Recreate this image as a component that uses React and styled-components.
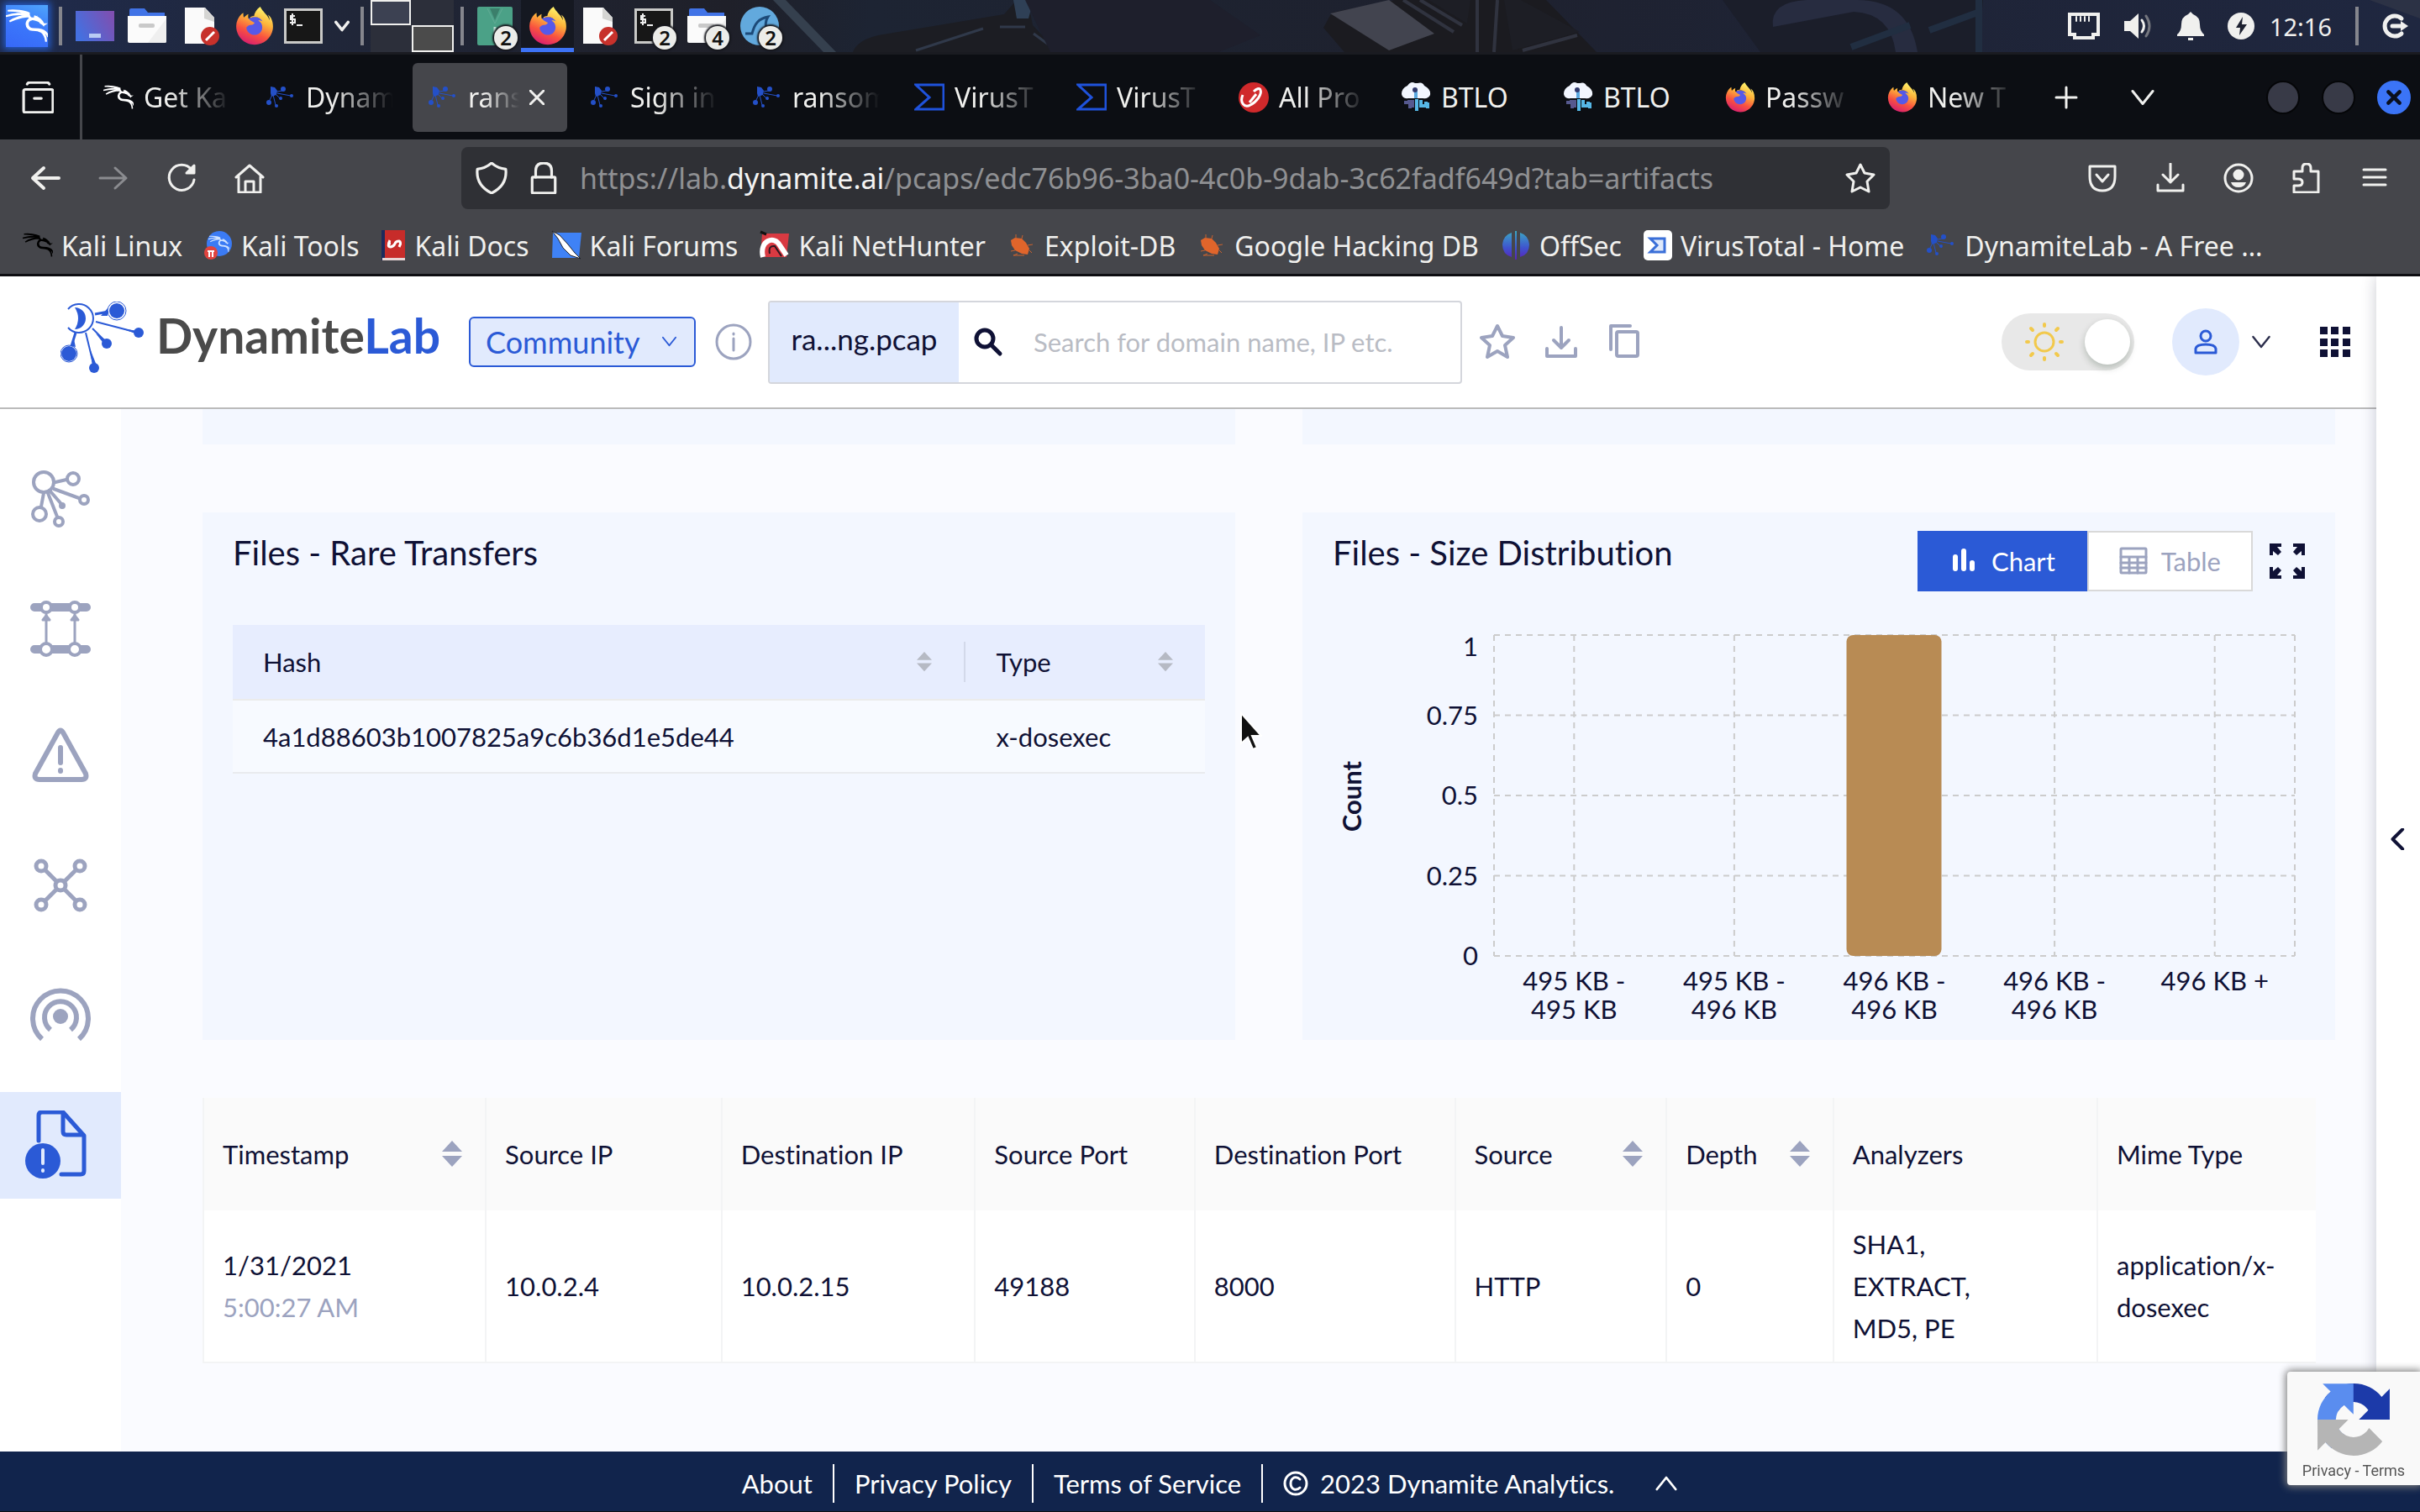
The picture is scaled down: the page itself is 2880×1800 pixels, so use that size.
import React from "react";
import styled, { createGlobalStyle, css } from "styled-components";
import { SiKalilinux } from "react-icons/si";
import { FaFirefoxBrowser } from "react-icons/fa";

const INK = "#0f1135";
const BLUE = "#2b5ad6";
const MUTED = "#9ca3bf";
const PALE = "#e1eafd";
const CHROME_TEXT = "#f0f0ee";

const GlobalStyle = createGlobalStyle`
  * { box-sizing: border-box; }
  html, body { margin: 0; padding: 0; }
  body {
    font-family: Lato, "Liberation Sans", sans-serif;
    font-size: 31px;
    font-variant-ligatures: none;
    color: ${INK};
    background: #fff;
  }
  button, input, select { font: inherit; color: inherit; }
  button { border: 0; padding: 0; background: none; cursor: pointer; }
  a { color: inherit; text-decoration: none; }
  svg { display: block; flex: none; }
`;

const Desktop = styled.div`
  min-height: 100vh;
  display: flex;
  flex-direction: column;
`;

/* ---------- desktop panel ---------- */

const Panel = styled.header`
  position: relative;
  height: 65px;
  display: flex;
  align-items: center;
  background: #1d2130;
  border-bottom: 3px solid #1a1b21;
  overflow: hidden;
  font-family: "Noto Sans", sans-serif;
  color: ${CHROME_TEXT};
`;
const Wallpaper = styled.svg`
  position: absolute;
  inset: 0;
  width: 100%;
  height: 100%;
`;
const PanelGroup = styled.div`
  position: relative;
  display: flex;
  align-items: center;
  height: 100%;
  gap: ${(p) => p.$gap || 0}px;
  padding: 0 ${(p) => p.$pad || 0}px;
  margin-left: ${(p) => (p.$end ? "auto" : 0)};
`;
const PanelRule = styled.span`
  position: relative;
  width: 4px;
  height: 46px;
  background: #85868d;
`;
const PanelButton = styled.button`
  position: relative;
  height: 100%;
  width: ${(p) => p.$w || 63}px;
  display: grid;
  place-items: center;
  ${(p) => p.$active && css`
    background: #151821;
    box-shadow: inset 0 -5px #3d73f6;
  `}
`;
const KaliButton = styled.button`
  width: 50px;
  height: 50px;
  display: grid;
  place-items: center;
  color: #fff;
  background: linear-gradient(20deg, #3768f7, #3b77fb 50%, #4fa5fb);
  box-shadow: 0 0 8px 3px #245bc9;
`;
const Badge = styled.span`
  position: absolute;
  right: 4px;
  bottom: 3px;
  width: 28px;
  height: 28px;
  border-radius: 50%;
  background: #ecece9;
  box-shadow: 0 0 2px 2px #15161c;
  color: #111;
  font-size: 24px;
  font-weight: 600;
  line-height: 28px;
  text-align: center;
`;
const Workspaces = styled.div`
  display: grid;
  grid-template-columns: 48px 50px;
  grid-template-rows: 30px 32px;
  column-gap: 1px;
  height: 62px;
  background: #2c2f3b;
`;
const Space = styled.button`
  background: ${(p) => p.$fill || "#2c2f3a"};
  border: ${(p) => (p.$on ? "2px solid #f0f0ee" : 0)};
`;
const ClockGroup = styled.div`
  display: flex;
  align-items: center;
  gap: 18px;
  font-size: 29px;
`;

/* ---------- browser ---------- */

const Browser = styled.section`
  position: relative;
  z-index: 2;
  font-family: "Noto Sans", sans-serif;
  font-size: 32px;
  color: ${CHROME_TEXT};
  background: #45464b;
  border-bottom: 3px solid #0e0e12;
`;
const TabStrip = styled.div`
  height: 101px;
  display: flex;
  align-items: center;
  background: #0c0e13;
`;
const TabHistory = styled.button`
  width: 98px;
  height: 100%;
  padding-left: 26px;
  display: flex;
  align-items: center;
  border-right: 3px solid #45464b;
`;
const Tabs = styled.div`
  display: flex;
  gap: 9px;
  padding-left: 7px;
`;
const Tab = styled.button`
  width: 184px;
  height: 82px;
  padding: 0 ${(p) => (p.$active ? 27 : 14)}px 0 18px;
  display: flex;
  align-items: center;
  gap: 12px;
  border-radius: 6px;
  background: ${(p) => (p.$active ? "#45464b" : "transparent")};
`;
const TabLabel = styled.span`
  flex: 1;
  min-width: 0;
  white-space: nowrap;
  text-align: left;
  ${(p) => p.$fade && css`
    mask-image: linear-gradient(90deg, #000 30%, transparent);
  `}
`;
const TabTools = styled.div`
  display: flex;
  align-items: center;
  gap: 60px;
  padding-left: 31px;
`;
const WindowButtons = styled.div`
  display: flex;
  align-items: center;
  gap: 26px;
  margin-left: auto;
  padding-right: 11px;
`;
const WindowButton = styled.button`
  width: 40px;
  height: 40px;
  border-radius: 50%;
  display: grid;
  place-items: center;
  border: 2px solid ${(p) => (p.$close ? "#3b74f6" : "#050608")};
  background: ${(p) => (p.$close ? "#3b74f6" : "#383a47")};
`;
const NavBar = styled.nav`
  height: 92px;
  display: flex;
  align-items: center;
`;
const NavGroup = styled.div`
  display: flex;
  align-items: center;
  gap: 45px;
  width: ${(p) => (p.$wide ? "549px" : "auto")};
  padding: 0 ${(p) => p.$right || 0}px 0 ${(p) => p.$left || 0}px;
`;
const UrlBar = styled.div`
  flex: 0 1 1700px;
  height: 74px;
  display: flex;
  align-items: center;
  gap: 24px;
  padding: 0 17px;
  margin-right: auto;
  border-radius: 8px;
  background: #2f3035;
`;
const Url = styled.div`
  flex: 1;
  overflow: hidden;
  white-space: nowrap;
  font-size: 34px;
  color: #8f9093;
  outline: none;
`;
const Host = styled.span`
  color: #f4f4f3;
`;
const Bookmarks = styled.nav`
  height: 68px;
  display: flex;
  align-items: center;
  gap: 26px;
  padding: 0 27px;
`;
const Bookmark = styled.a`
  display: flex;
  align-items: center;
  gap: 10px;
  white-space: nowrap;
`;

/* ---------- web page ---------- */

const Page = styled.div`
  flex: 1;
  display: flex;
`;
const Site = styled.div`
  flex: 1;
  min-width: 0;
  display: flex;
  flex-direction: column;
`;
const SideDrawer = styled.aside`
  width: 52px;
  display: grid;
  place-items: center;
  padding-bottom: 60px;
  background: #fff;
  box-shadow: 0 0 18px rgba(20, 24, 50, 0.22);
`;
const TopBar = styled.header`
  height: 158px;
  display: flex;
  align-items: center;
  padding: 0 31px 0 72px;
  background: #fff;
  border-bottom: 2px solid #bbb;
`;
const Brand = styled.a`
  display: flex;
  align-items: center;
  gap: 14px;
  width: 486px;
  padding-bottom: 8px;
`;
const BrandName = styled.span`
  padding-bottom: 8px;
  font-size: 57px;
  font-weight: 700;
  line-height: 80px;
  color: #4a4a4a;
`;
const BrandTail = styled.span`
  color: ${BLUE};
`;
const PlanBox = styled.div`
  position: relative;
  width: 270px;
`;
const PlanSelect = styled.select`
  appearance: none;
  width: 100%;
  height: 60px;
  padding: 0 18px;
  border: 2px solid ${BLUE};
  border-radius: 6px;
  background: ${PALE};
  color: ${BLUE};
  font-size: 36px;
`;
const PlanArrow = styled.span`
  position: absolute;
  right: 22px;
  top: 20px;
  color: ${BLUE};
  pointer-events: none;
`;
const IconButton = styled.button`
  display: grid;
  place-items: center;
  color: ${(p) => p.$color || MUTED};
`;
const SearchGroup = styled.form`
  display: flex;
  width: 826px;
  height: 99px;
  border: 2px solid #d4d6dc;
  border-radius: 4px;
  overflow: hidden;
`;
const FileTag = styled.span`
  width: 225px;
  display: grid;
  place-items: center;
  padding-bottom: 8px;
  background: ${PALE};
  font-size: 35px;
`;
const SearchLabel = styled.label`
  flex: 1;
  display: flex;
  align-items: center;
  gap: 34px;
  padding-left: 17px;
`;
const SearchInput = styled.input`
  flex: 1;
  min-width: 0;
  border: 0;
  outline: none;
  background: none;
  &::placeholder { color: #b9bcc4; opacity: 1; }
`;
const Actions = styled.div`
  display: flex;
  align-items: center;
  gap: ${(p) => p.$gap}px;
  padding-left: ${(p) => p.$left || 0}px;
  margin-left: ${(p) => (p.$end ? "auto" : 0)};
`;
const Toggle = styled.label`
  display: flex;
  align-items: center;
  justify-content: space-between;
  width: 158px;
  height: 68px;
  padding: 0 5px 0 28px;
  margin-right: 45px;
  border-radius: 34px;
  background: #e8e8e8;
`;
const ToggleInput = styled.input`
  appearance: none;
  margin: 0;
  width: 54px;
  height: 54px;
  border-radius: 50%;
  background: #fff;
  box-shadow: 0 4px 8px rgba(0, 35, 11, 0.22);
`;
const Avatar = styled.button`
  width: 80px;
  height: 80px;
  border-radius: 50%;
  display: grid;
  place-items: center;
  background: ${PALE};
  color: ${BLUE};
`;
const Body = styled.div`
  flex: 1;
  display: flex;
`;
const Sidebar = styled.nav`
  width: 144px;
  padding-top: 43px;
  display: flex;
  flex-direction: column;
  gap: 27px;
  background: #fff;
`;
const SideItem = styled.button`
  height: 127px;
  display: grid;
  place-items: center;
  color: ${(p) => (p.$active ? BLUE : MUTED)};
  background: ${(p) => (p.$active ? PALE : "transparent")};
`;
const Content = styled.main`
  flex: 1;
  min-width: 0;
  padding: 0 49px 80px 97px;
  background: #fafbff;
`;
const CardRow = styled.div`
  display: grid;
  grid-template-columns: 1fr 1fr;
  gap: 80px;
  margin-bottom: ${(p) => p.$below}px;
`;
const CardTail = styled.div`
  height: 42px;
  background: #f3f7ff;
`;
const Card = styled.section`
  min-height: 628px;
  min-width: 0;
  padding: 22px 36px 0;
  background: #f3f7ff;
`;
const CardHead = styled.div`
  display: flex;
  align-items: center;
  height: 72px;
  margin-bottom: 40px;
`;
const CardTitle = styled.h2`
  margin: 0 auto 0 0;
  padding-bottom: 20px;
  font-size: 40px;
  font-weight: 400;
`;
const Switcher = styled.div`
  display: flex;
  margin-right: 20px;
`;
const SwitchButton = styled.button`
  height: 72px;
  display: flex;
  align-items: center;
  gap: 16px;
  padding: 0 36px;
  background: ${(p) => (p.$active ? BLUE : "#fff")};
  color: ${(p) => (p.$active ? "#fff" : MUTED)};
  border: 2px solid ${(p) => (p.$active ? BLUE : "#d9d9d9")};
`;
const HashTable = styled.table`
  width: 100%;
  border-collapse: collapse;
  table-layout: fixed;
`;
const HashHead = styled.th`
  width: ${(p) => p.$w || "auto"};
  height: 89px;
  padding: 0;
  font-weight: 400;
  text-align: left;
  background: #e7edfe;
  border-bottom: 2px solid #ebebeb;
`;
const HashHeadInner = styled.div`
  height: 48px;
  display: flex;
  align-items: center;
  justify-content: space-between;
  padding: 0 38px 0 36px;
  color: #b6bac4;
  border-right: ${(p) => (p.$rule ? "2px solid #d3d9ea" : 0)};
`;
const HeadText = styled.span`
  color: ${INK};
`;
const HashCell = styled.td`
  height: 87px;
  padding: 0 36px;
  background: #f7faff;
  border-bottom: 2px solid #e9ebee;
`;
const LogScroller = styled.div`
  margin-right: 23px;
  overflow: hidden;
`;
const LogTable = styled.table`
  width: 100%;
  border-collapse: collapse;
  table-layout: fixed;
`;
const LogHead = styled.th`
  width: ${(p) => p.$w};
  height: 134px;
  padding: 0 27px 0 22px;
  font-weight: 400;
  text-align: left;
  white-space: nowrap;
  background: #fafafa;
  border-left: 2px solid #f3f4f5;
`;
const LogHeadInner = styled.div`
  display: flex;
  align-items: center;
  justify-content: space-between;
  color: ${MUTED};
`;
const LogCell = styled.td`
  padding: 15px 22px;
  line-height: 50px;
  background: #fff;
  border-left: 2px solid #f3f4f5;
  border-bottom: 2px solid #f3f4f5;
`;
const Faint = styled.div`
  color: ${MUTED};
`;
const Footer = styled.footer`
  position: relative;
  z-index: 1;
  height: 72px;
  padding-top: 4px;
  display: flex;
  align-items: center;
  justify-content: center;
  background: #11244c;
  border-bottom: 1px solid #0c0d12;
  color: #fff;
`;
const FooterItem = styled.span`
  height: 46px;
  display: flex;
  align-items: center;
  gap: 14px;
  padding: 0 24px;
  border-right: ${(p) => (p.$rule ? "2px solid #fff" : 0)};
`;
const Captcha = styled.aside`
  position: fixed;
  right: 0;
  bottom: 32px;
  z-index: 3;
  width: 158px;
  height: 135px;
  padding-top: 14px;
  display: flex;
  flex-direction: column;
  align-items: center;
  gap: 6px;
  border-radius: 4px 0 0 4px;
  background: #f9f9f9;
  box-shadow: 0 0 10px 2px #808080;
`;
const CaptchaLinks = styled.span`
  font-family: Roboto, sans-serif;
  font-size: 18px;
  line-height: 24px;
  color: #555;
`;
const Pointer = styled.svg`
  position: absolute;
  left: 1474px;
  top: 846px;
  z-index: 4;
`;

/* ---------- icons ---------- */

const Stroke = ({ w = 36, h, vb = "0 0 36 36", sw = 3, children, ...rest }) => (
  <svg width={w} height={h || w} viewBox={vb} fill="none" stroke="currentColor" strokeWidth={sw} strokeLinecap="round" strokeLinejoin="round" {...rest}>
    {children}
  </svg>
);
const Chevron = ({ dir = "down", w = 20, sw = 3 }) => (
  <Stroke w={w} vb="0 0 20 20" sw={sw}>
    <path d={{ down: "M2 5l8 10 8-10", up: "M2 15l8-10 8 10", left: "M14 1L5 10l9 9" }[dir]} />
  </Stroke>
);
const FirefoxIcon = ({ size = 46 }) => (
  <svg width={size} height={size} viewBox="0 0 46 46">
    <defs>
      <linearGradient id="fx" x1="0.75" y1="0.05" x2="0.35" y2="1">
        <stop offset="0" stopColor="#fff36b" />
        <stop offset="0.35" stopColor="#fdb43a" />
        <stop offset="0.68" stopColor="#f9523f" />
        <stop offset="1" stopColor="#d91f6f" />
      </linearGradient>
    </defs>
    <circle cx="23" cy="25" r="13" fill="#5659e8" />
    <FaFirefoxBrowser size={46} fill="url(#fx)" />
  </svg>
);
const FolderIcon = () => (
  <svg width="46" height="42" viewBox="0 0 46 42">
    <path d="M2 2q0-2 2-2h16l4 5h20v8H2z" fill="#4173e6" />
    <path d="M0 9h46v30q0 2-2 2H2q-2 0-2-2z" fill="#fbfbfb" />
    <path d="M46 12v27q0 2-2 2H24z" fill="#efefef" />
    <rect x="13" y="18" width="19" height="5" rx="2" fill="#c9c9c9" />
  </svg>
);
const FileIcon = () => (
  <svg width="44" height="48" viewBox="0 0 44 48">
    <path d="M1 2h24l11 12v31H1z" fill="#fafafa" />
    <path d="M24 2l12 12v5l-12-4z" fill="#d5d5d3" />
    <circle cx="31" cy="36" r="11" fill="#c7312b" />
    <path d="M26 41l10-10" stroke="#fff" strokeWidth="3" />
  </svg>
);
const TerminalIcon = () => (
  <svg width="46" height="42" viewBox="0 0 46 42">
    <rect x="1.500" y="1.500" width="43" height="39" fill="#171717" stroke="#c9c9c7" strokeWidth="3" />
    <path d="M13 9H8v4h5v4H7M10 6v14M15 20h7" stroke="#eee" strokeWidth="2" fill="none" />
  </svg>
);
const ScreenIcon = () => (
  <svg width="46" height="36" viewBox="0 0 46 36">
    <defs>
      <linearGradient id="scr" x1="0" y1="0.6" x2="1" y2="0.2">
        <stop offset="0" stopColor="#4470e0" />
        <stop offset="1" stopColor="#7f4fb0" />
      </linearGradient>
    </defs>
    <rect width="46" height="36" fill="url(#scr)" />
    <rect x="16" y="27" width="14" height="5" fill="#b9cbf4" />
  </svg>
);
const ZipIcon = () => (
  <svg width="42" height="46" viewBox="0 0 42 46">
    <rect width="42" height="46" rx="2" fill="#4ba187" />
    <path d="M15 2h12l-6 14z" fill="#3b7f6b" />
    <path d="M12 2l9 18 9-18" stroke="#62ab95" strokeWidth="1" fill="none" />
    <path d="M21 24v9" stroke="#bfe0d4" strokeWidth="3" />
  </svg>
);
const SharkIcon = () => (
  <svg width="48" height="48" viewBox="0 0 48 48">
    <circle cx="24" cy="24" r="23" fill="#62a9dd" />
    <path d="M7 33h8c3-12 8-18 19-20-4 6-3 10-1 18" fill="none" stroke="#1d4a78" strokeWidth="3" />
  </svg>
);
const DynLogo = () => (
  <svg width="100" height="88" viewBox="0 0 100 88" fill={BLUE} stroke={BLUE}>
    <path d="M9 9A17 17 0 1 1 9 31" fill="none" strokeWidth="2" />
    <path d="M17 7A13 13 0 1 1 17 33Q25 20 17 7z" stroke="none" />
    <g strokeWidth="2">
      <path d="M41 15l16-3" strokeWidth="3" />
      <path d="M42 24l50 13M38 32l17 17M30 37l10 41" />
      <path d="M18 37l-5 16" strokeWidth="3" />
    </g>
    <g fill="none" strokeWidth="1">
      <circle cx="67" cy="11" r="11" />
      <circle cx="10" cy="62" r="10" />
    </g>
    <g stroke="none">
      <circle cx="67" cy="11" r="9" />
      <circle cx="93" cy="37" r="6" />
      <circle cx="55" cy="50" r="6" />
      <circle cx="10" cy="62" r="9" />
      <circle cx="40" cy="79" r="6" />
      <path d="M48 17l8-9v9zM72 32l20 3v4zM42 38l14 9-3 5zM35 56l8 20h-5zM16 45l2 9-6-1z" />
    </g>
  </svg>
);
const DynTab = () => (
  <svg width="36" height="36" viewBox="0 0 36 36" fill="#2450c8" stroke="#2450c8">
    <g strokeWidth="1">
      <path d="M14 11l6-1M14 13l16 3M12 14l7 7M9 15l3 12M8 15l-4 8" />
    </g>
    <g stroke="none">
      <path d="M6 5l5 1 3 4-1 5-6 2-1-4z" />
      <circle cx="21" cy="8" r="3" />
      <circle cx="31" cy="16" r="2" />
      <circle cx="18" cy="19" r="2" />
      <circle cx="4" cy="24" r="3" />
      <circle cx="13" cy="28" r="2" />
    </g>
  </svg>
);
const VirusTotalTab = () => (
  <Stroke sw={3} color="#1f52dc">
    <path d="M2 3h33v29H2l16-14z" strokeLinejoin="miter" />
  </Stroke>
);
const VirusTotalMark = () => (
  <svg width="34" height="36" viewBox="0 0 34 36">
    <rect width="34" height="36" rx="5" fill="#fff" />
    <path d="M8 10h17v16H8l8-8z" fill="#dfe9fb" stroke="#3a6fd8" strokeWidth="3" />
  </svg>
);
const TrendIcon = () => (
  <svg width="36" height="36" viewBox="0 0 36 36">
    <circle cx="18" cy="18" r="18" fill="#d0292b" />
    <path d="M5 15c-4 9 2 16 9 12 8-4 14-13 12-18-1-3-5-1-8 2" fill="none" stroke="#fff" strokeWidth="3" />
    <path d="M13 24l8-10" stroke="#fff" strokeWidth="3" />
  </svg>
);
const BtloIcon = () => (
  <svg width="36" height="36" viewBox="0 0 36 36">
    <path d="M8 4q4-6 9-3h3q6-2 8 3 8 4 7 11-2 5-9 4H9Q2 20 1 14 1 7 8 4z" fill="#f2f6ff" />
    <path d="M18 8v11" stroke="#5aa9e0" strokeWidth="4" />
    <circle cx="17" cy="9" r="3" fill="#323a6e" />
    <path d="M4 24h7v7M10 21v5M14 21v9" stroke="#56598f" strokeWidth="4" fill="none" />
    <path d="M19 20v14M24 21v7h6v-5M32 24v7" stroke="#56b7e6" strokeWidth="4" fill="none" />
  </svg>
);
const KaliMark = ({ color = "#fff", size = 36 }) => (
  <SiKalilinux size={size} color={color} stroke={color} strokeWidth={1} />
);
const KaliToolsIcon = () => (
  <svg width="34" height="36" viewBox="0 0 34 36">
    <circle cx="18" cy="16" r="15" fill="#3b7bf4" />
    <SiKalilinux x="5" y="4" size={25} color="#cfe2ff" stroke="#cfe2ff" strokeWidth={1} />
    <circle cx="8" cy="27" r="8" fill="#e0443f" />
    <path d="M4 25h8M6 25v7M10 25v7" stroke="#fff" strokeWidth="2" />
  </svg>
);
const KaliDocsIcon = () => (
  <svg width="30" height="36" viewBox="0 0 30 36">
    <rect x="1" width="27" height="36" fill="#c72c2a" />
    <rect width="4" height="36" fill="#1c2a5c" />
    <rect x="1" y="33" width="27" height="3" fill="#e8d5d5" />
    <path d="M10 12q-4 8 1 8 4-1 5-4t5-3q3 1 0 7M8 16h3M21 16h3" stroke="#fff" strokeWidth="3" fill="none" />
  </svg>
);
const KaliForumsIcon = () => (
  <svg width="36" height="36" viewBox="0 0 36 36">
    <path d="M2 3h34l-3 30H1z" fill="#3f82f6" />
    <path d="M1 1l9 5 10 11 8 10 7 7-12-4-9-9-6-11z" fill="#fff" stroke="#20242c" strokeWidth="1" />
  </svg>
);
const NetHunterIcon = () => (
  <svg width="36" height="36" viewBox="0 0 36 36">
    <path d="M3 4h32l-3 28H1z" fill="#d93a42" />
    <path d="M4 32C-1 12 18 6 24 18l8 12" fill="none" stroke="#fff" strokeWidth="6" />
    <path d="M12 28q-2-10 6-9l8 12" fill="none" stroke="#2a1720" strokeWidth="2" />
    <path d="M1 2l7 3" stroke="#111" strokeWidth="3" />
  </svg>
);
const ExploitIcon = () => (
  <svg width="34" height="36" viewBox="0 0 34 36" fill="#e0652b" stroke="#c9622f">
    <path d="M4 12l5-3 8 1 5 5 4 7-2 7-7-1-8-4-4-6z" stroke="none" />
    <path d="M10 10L10 5M17 10l1-4M24 18l6-1M26 24l3 3M9 24l-5 1M12 28l-5 2h13" strokeWidth="1" fill="none" />
  </svg>
);
const OffSecIcon = () => (
  <svg width="36" height="36" viewBox="0 0 36 36">
    <defs>
      <linearGradient id="off" x1="0" y1="0" x2="0" y2="1">
        <stop offset="0" stopColor="#3ba9c4" />
        <stop offset="0.6" stopColor="#3f52cf" />
        <stop offset="1" stopColor="#5a22b8" />
      </linearGradient>
    </defs>
    <path d="M13 3v29Q2 29 2 17 3 6 13 3zM23 3v29q11-3 11-15Q33 6 23 3zM17 1h2v34h-2z" fill="url(#off)" />
  </svg>
);
const SortIcon = ({ w = 24 }) => (
  <svg width={w} height={w * 1.3} viewBox="0 0 24 31" fill="currentColor">
    <path d="M12 0l12 13H0zM12 31l12-13H0z" />
  </svg>
);

const SideGlyphs = {
  overview: (
    <Stroke w={72} vb="0 0 72 72" sw={4}>
      <circle cx="16" cy="16" r="12" />
      <circle cx="51" cy="12" r="7" />
      <circle cx="64" cy="37" r="5" />
      <circle cx="38" cy="44" r="2" />
      <circle cx="11" cy="54" r="8" />
      <circle cx="34" cy="63" r="5" />
      <path d="M30 16l13-3M28 24l30 11M24 27l13 15M16 29l-3 16M21 29l11 28" />
    </Stroke>
  ),
  flows: (
    <Stroke w={72} vb="0 0 72 72" sw={3}>
      <path d="M5 11h62M5 61h62" strokeWidth="10" />
      <path d="M19 19v34M53 19v34" />
      <path d="M15 26l4-5 4 5zM49 26l4-5 4 5z" fill="currentColor" />
      <g fill="#fff" strokeWidth="4">
        <circle cx="19" cy="11" r="6" />
        <circle cx="53" cy="11" r="6" />
        <circle cx="19" cy="61" r="7" />
        <circle cx="53" cy="61" r="7" />
      </g>
    </Stroke>
  ),
  alerts: (
    <Stroke w={72} vb="0 0 72 72" sw={6}>
      <path d="M33 6q3-5 6 0l27 49q2 7-5 7H11q-7 0-5-7z" />
      <path d="M36 24v18M36 51v1" />
    </Stroke>
  ),
  graph: (
    <Stroke w={72} vb="0 0 72 72" sw={5}>
      <circle cx="36" cy="34" r="6" />
      <circle cx="13" cy="11" r="6" />
      <circle cx="59" cy="11" r="6" />
      <circle cx="13" cy="57" r="6" />
      <circle cx="59" cy="57" r="6" />
      <path d="M18 16l13 13M54 16L41 29M18 52l13-13M54 52L41 39" />
    </Stroke>
  ),
  signal: (
    <Stroke w={72} vb="0 0 72 72" sw={6}>
      <circle cx="36" cy="36" r="9" fill="currentColor" stroke="none" />
      <path d="M14 63A33 33 0 1 1 58 63" strokeLinecap="butt" />
      <path d="M24 52A19 19 0 1 1 48 52" strokeLinecap="butt" />
    </Stroke>
  ),
  artifacts: (
    <Stroke w={84} vb="0 0 84 84" sw={5}>
      <path d="M16 36V6q0-4 4-4h25l25 28v42q0 4-4 4H43" />
      <path d="M45 3v22q0 4 4 4h20" />
      <circle cx="21" cy="60" r="21" fill="currentColor" stroke="none" />
      <path d="M21 47v16M21 71v1" stroke="#e1eafd" strokeWidth="4" />
    </Stroke>
  ),
};

/* ---------- data ---------- */

const tabs = [
  ["Get Ka", <KaliMark />],
  ["Dynam", <DynTab />],
  ["rans", <DynTab />],
  ["Sign in", <DynTab />],
  ["ransom", <DynTab />],
  ["VirusT", <VirusTotalTab />],
  ["VirusT", <VirusTotalTab />],
  ["All Pro", <TrendIcon />],
  ["BTLO", <BtloIcon />],
  ["BTLO", <BtloIcon />],
  ["Passw", <FirefoxIcon size={36} />],
  ["New T", <FirefoxIcon size={36} />],
];
const ACTIVE_TAB = 2;

const bookmarks = [
  ["Kali Linux", <KaliMark color="#000" />],
  ["Kali Tools", <KaliToolsIcon />],
  ["Kali Docs", <KaliDocsIcon />],
  ["Kali Forums", <KaliForumsIcon />],
  ["Kali NetHunter", <NetHunterIcon />],
  ["Exploit-DB", <ExploitIcon />],
  ["Google Hacking DB", <ExploitIcon />],
  ["OffSec", <OffSecIcon />],
  ["VirusTotal - Home", <VirusTotalMark />],
  ["DynamiteLab - A Free …", <DynTab />],
];

const runningApps = [
  { icon: <ZipIcon />, name: "Archives", count: 2 },
  { icon: <FirefoxIcon />, name: "Firefox", active: true },
  { icon: <FileIcon />, name: "Editor" },
  { icon: <TerminalIcon />, name: "Terminal", count: 2 },
  { icon: <FolderIcon />, name: "Files", count: 4 },
  { icon: <SharkIcon />, name: "Wireshark", count: 2 },
];

const columns = [
  { title: "Timestamp", w: "13.37%", sort: true },
  { title: "Source IP", w: "11.16%" },
  { title: "Destination IP", w: "12%" },
  { title: "Source Port", w: "10.4%" },
  { title: "Destination Port", w: "12.32%" },
  { title: "Source", w: "10.01%", sort: true },
  { title: "Depth", w: "7.9%", sort: true },
  { title: "Analyzers", w: "12.5%" },
  { title: "Mime Type", w: "10.34%" },
];

const buckets = [
  { label: ["495 KB -", "495 KB"], count: 0 },
  { label: ["495 KB -", "496 KB"], count: 0 },
  { label: ["496 KB -", "496 KB"], count: 1 },
  { label: ["496 KB -", "496 KB"], count: 0 },
  { label: ["496 KB +"], count: 0 },
];

/* ---------- parts ---------- */

function TopPanel() {
  return (
    <Panel>
      <Wallpaper viewBox="0 0 2880 62" preserveAspectRatio="none" aria-hidden="true">
        <defs>
          <linearGradient id="wp">
            <stop offset="0" stopColor="#1f2b4d" />
            <stop offset="0.12" stopColor="#20273b" />
            <stop offset="0.3" stopColor="#1f2029" />
            <stop offset="0.36" stopColor="#1d2433" />
            <stop offset="0.6" stopColor="#1e212e" />
            <stop offset="1" stopColor="#1f2740" />
          </linearGradient>
        </defs>
        <rect width="2880" height="62" fill="url(#wp)" />
        <path d="M920 0h15l60 62h-15z" fill="#35404e" />
        <path d="M1015 62q5-14 30-20l150-25 15-17h13l6 30 30 32z" fill="#1c1d23" />
        <path d="M1206 0h24l-6 22h-14z" fill="#2f4056" />
        <path d="M1090 60l80-26M1230 40l30 22M1190 32h30" stroke="#30394a" strokeWidth="3" />
        <path d="M1440 0l60 42-50 20h-200L1220 0z" fill="#1e1f2c" />
        <path d="M1575 33l10-18 75-15h180l60 62h-300z" fill="#1b1b20" />
        <path d="M1583 16l70-16 54 40-54 20z" fill="#42444f" />
        <path d="M1670 0l60 38M1690 0l50 30M1758 0v62M1782 0l-4 62M1812 60l65-18" stroke="#30333f" strokeWidth="4" fill="none" />
        <path d="M1700 0h50l-4 28zM1790 0h20l70 38-80 22z" fill="#1d1e25" />
        <path d="M2050 0h310l-5 62h-260z" fill="#1b1e2a" />
        <path d="M2110 32q-4-30 40-32h60q62 0 72 62h-26q-6-46-50-48z" fill="#272c40" />
        <path d="M2203 56l70-26M2296 36l60-22M2355 0v62" stroke="#212e41" strokeWidth="8" fill="none" />
        <path d="M2820 0h60v22z" fill="#2c3245" />
      </Wallpaper>
      <PanelGroup $pad={7}>
        <KaliButton aria-label="Applications"><KaliMark size={50} /></KaliButton>
      </PanelGroup>
      <PanelGroup $pad={6}><PanelRule /></PanelGroup>
      <PanelGroup $pad={2}>
        <PanelButton $w={62} aria-label="Show desktop"><ScreenIcon /></PanelButton>
        <PanelButton $w={62} aria-label="Files"><FolderIcon /></PanelButton>
        <PanelButton $w={70} aria-label="Editor"><FileIcon /></PanelButton>
        <PanelButton $w={54} aria-label="Firefox"><FirefoxIcon /></PanelButton>
        <PanelButton $w={62} aria-label="Terminal"><TerminalIcon /></PanelButton>
        <PanelButton $w={30} aria-label="More"><Chevron w={18} sw={4} /></PanelButton>
      </PanelGroup>
      <PanelGroup $pad={5}><PanelRule /></PanelGroup>
      <PanelGroup $pad={3}>
        <Workspaces>
          <Space $on $fill="#3c4152" aria-label="Workspace 1" />
          <Space aria-label="Workspace 2" />
          <Space aria-label="Workspace 3" />
          <Space $on $fill="#4b4b4b" aria-label="Workspace 4" />
        </Workspaces>
      </PanelGroup>
      <PanelGroup $pad={5}><PanelRule /></PanelGroup>
      <PanelGroup>
        {runningApps.map((a) => (
          <PanelButton key={a.name} $active={a.active} aria-label={a.name}>
            {a.icon}
            {a.count && <Badge>{a.count}</Badge>}
          </PanelButton>
        ))}
      </PanelGroup>
      <PanelGroup $end $gap={28} $pad={13}>
        <Stroke w={38} h={32} vb="0 0 38 32" sw={4}>
          <path d="M2 2h34v24h-6v4H8v-4H2z" strokeLinejoin="miter" />
          <path d="M10 5v5M15 5v5M20 5v5M25 5v5" strokeWidth="2" />
        </Stroke>
        <Stroke sw={3}>
          <path d="M1 12h7L18 3v30l-10-9H1z" fill="currentColor" stroke="none" />
          <path d="M22 11q5 7 0 14" />
          <path d="M27 6q8 12 0 24" stroke="#74767e" />
        </Stroke>
        <svg width="32" height="34" viewBox="0 0 32 34" fill="currentColor">
          <path d="M16 0l3 3q8 3 8 12 0 8 5 12v2H0v-2q5-4 5-12 0-9 8-12zM13 31h6v3h-6z" />
        </svg>
        <ClockGroup>
          <svg width="32" height="32" viewBox="0 0 32 32">
            <circle cx="16" cy="16" r="16" fill="currentColor" />
            <path d="M18 5l-8 13h5l-1 9 9-13h-6z" fill="#1d2130" />
          </svg>
          <time>12:16</time>
        </ClockGroup>
        <PanelRule />
        <Stroke w={32} vb="0 0 32 32" sw={5}>
          <path d="M23 7A12 12 0 1 0 23 25" />
          <path d="M12 16h10" />
          <path d="M22 10l9 6-9 6z" fill="currentColor" stroke="none" />
        </Stroke>
      </PanelGroup>
    </Panel>
  );
}

function BrowserChrome() {
  return (
    <Browser>
      <TabStrip>
        <TabHistory aria-label="Recent browsing">
          <Stroke w={38}>
            <path d="M6 3q1-2 3-2h19q2 0 3 2" />
            <rect x="2" y="9" width="33" height="26" rx="2" />
            <path d="M14 19h8" />
          </Stroke>
        </TabHistory>
        <Tabs role="tablist">
          {tabs.map(([label, icon], i) => (
            <Tab key={i} role="tab" aria-selected={i === ACTIVE_TAB} $active={i === ACTIVE_TAB}>
              {icon}
              <TabLabel $fade={label !== "BTLO"}>{label}</TabLabel>
              {i === ACTIVE_TAB && (
                <Stroke w={18} vb="0 0 18 18"><path d="M1 1l16 16M17 1L1 17" /></Stroke>
              )}
            </Tab>
          ))}
        </Tabs>
        <TabTools>
          <IconButton $color={CHROME_TEXT} aria-label="New tab">
            <Stroke w={32} vb="0 0 32 32"><path d="M16 4v24M4 16h24" /></Stroke>
          </IconButton>
          <IconButton $color={CHROME_TEXT} aria-label="List tabs"><Chevron w={30} sw={2} /></IconButton>
        </TabTools>
        <WindowButtons>
          <WindowButton aria-label="Minimize" />
          <WindowButton aria-label="Maximize" />
          <WindowButton $close aria-label="Close">
            <Stroke w={20} vb="0 0 18 18" sw={4} color="#0a0f1c"><path d="M3 3l12 12M15 3L3 15" /></Stroke>
          </WindowButton>
        </WindowButtons>
      </TabStrip>
      <NavBar>
        <NavGroup $wide $left={36}>
          <IconButton $color={CHROME_TEXT} aria-label="Back">
            <Stroke sw={4}><path d="M3 18h31M16 6L3 18l13 12" /></Stroke>
          </IconButton>
          <IconButton $color="#8b8c90" aria-label="Forward">
            <Stroke><path d="M2 18h31M20 6l13 12-13 12" /></Stroke>
          </IconButton>
          <IconButton $color={CHROME_TEXT} aria-label="Reload">
            <Stroke>
              <path d="M30 8A15 15 0 1 0 33 20" />
              <path d="M33 3v9h-9z" fill="currentColor" />
            </Stroke>
          </IconButton>
          <IconButton $color={CHROME_TEXT} aria-label="Home">
            <Stroke><path d="M2 17L18 3l16 14M5 16v19h26V16M13 35V22h10v13" /></Stroke>
          </IconButton>
        </NavGroup>
        <UrlBar>
          <Stroke w={38}><path d="M18 1Q25 7 34 8q2 18-16 27Q0 26 2 8q9-1 16-7z" /></Stroke>
          <Stroke w={38}>
            <rect x="5" y="17" width="26" height="18" rx="1" />
            <path d="M9 17V10q0-9 9-9t9 9v7" />
          </Stroke>
          <Url role="textbox" aria-label="Address" contentEditable suppressContentEditableWarning spellCheck={false}>
            https://lab.<Host>dynamite.ai</Host>/pcaps/edc76b96-3ba0-4c0b-9dab-3c62fadf649d?tab=artifacts
          </Url>
          <Stroke><path d="M18 2l5 10 11 2-8 8 2 12-10-5-10 5 2-12-8-8 11-2z" /></Stroke>
        </UrlBar>
        <NavGroup $right={36}>
          <IconButton $color={CHROME_TEXT} aria-label="Pocket">
            <Stroke><path d="M3 4h30v12q0 17-15 17T3 16zM11 14l7 8 7-8" /></Stroke>
          </IconButton>
          <IconButton $color={CHROME_TEXT} aria-label="Downloads">
            <Stroke><path d="M18 1v22M9 14l9 9 9-9M3 26v7h30v-7" /></Stroke>
          </IconButton>
          <IconButton $color={CHROME_TEXT} aria-label="Account">
            <Stroke>
              <circle cx="18" cy="18" r="16" />
              <circle cx="18" cy="14" r="5" fill="currentColor" />
              <path d="M9 23h18q-2 6-9 6t-9-6z" fill="currentColor" stroke="none" />
            </Stroke>
          </IconButton>
          <IconButton $color={CHROME_TEXT} aria-label="Extensions">
            <Stroke><path d="M3 10h10V6q0-5 5-5t5 5v4h9v25H3v-8h5q5 0 5-4t-5-4H3z" /></Stroke>
          </IconButton>
          <IconButton $color={CHROME_TEXT} aria-label="Menu">
            <Stroke><path d="M5 8h26M5 17h26M5 26h26" /></Stroke>
          </IconButton>
        </NavGroup>
      </NavBar>
      <Bookmarks>
        {bookmarks.map(([label, icon]) => (
          <Bookmark key={label} href="#">{icon}{label}</Bookmark>
        ))}
      </Bookmarks>
    </Browser>
  );
}

function SiteHeader() {
  return (
    <TopBar>
      <Brand href="#"><DynLogo /><BrandName>Dynamite<BrandTail>Lab</BrandTail></BrandName></Brand>
      <PlanBox>
        <PlanSelect aria-label="Plan" defaultValue="Community">
          <option>Community</option>
        </PlanSelect>
        <PlanArrow><Chevron w={19} sw={2} /></PlanArrow>
      </PlanBox>
      <Actions $gap={19} $left={23}>
        <IconButton aria-label="Info">
          <Stroke w={44} vb="0 0 44 44"><circle cx="22" cy="22" r="20" /><path d="M22 18v14M22 12v1" /></Stroke>
        </IconButton>
        <SearchGroup>
          <FileTag>ra...ng.pcap</FileTag>
          <SearchLabel>
            <Stroke sw={5}><circle cx="14" cy="14" r="10" /><path d="M22 22l10 10" /></Stroke>
            <SearchInput type="text" aria-label="Search" placeholder="Search for domain name, IP etc." />
          </SearchLabel>
        </SearchGroup>
      </Actions>
      <Actions $gap={32} $left={20}>
        <IconButton aria-label="Favourite">
          <Stroke w={44} vb="0 0 44 44" sw={4}><path d="M22 3l6 12 13 2-10 9 3 14-12-7-12 7 3-14-10-9 13-2z" /></Stroke>
        </IconButton>
        <IconButton aria-label="Download">
          <Stroke w={44} vb="0 0 44 44" sw={4}><path d="M22 5v23M13 20l9 9 9-9M5 30v9h34v-9" /></Stroke>
        </IconButton>
        <IconButton aria-label="Copy">
          <Stroke w={44} vb="0 0 44 44" sw={4}><rect x="12" y="10" width="25" height="29" rx="2" /><path d="M5 31V3h23" /></Stroke>
        </IconButton>
      </Actions>
      <Actions $end $gap={0}>
        <Toggle>
          <Stroke w={46} vb="0 0 46 46" sw={4} color="#f2c94c">
            <circle cx="23" cy="23" r="11" strokeWidth="3" />
            <path d="M23 2v2M23 42v2M2 23h2M42 23h2M7 7l2 2M37 37l2 2M7 39l2-2M37 9l2-2" />
          </Stroke>
          <ToggleInput type="checkbox" defaultChecked aria-label="Light theme" />
        </Toggle>
        <Avatar aria-label="Account">
          <Stroke w={30} vb="0 0 30 30"><circle cx="15" cy="8" r="6" /><path d="M3 28v-5q1-5 12-5t12 5v5z" /></Stroke>
        </Avatar>
        <Actions $gap={58} $left={14}>
          <IconButton $color="#2c2e4c" aria-label="Account menu"><Chevron w={24} sw={2} /></IconButton>
          <IconButton $color={INK} aria-label="Apps">
            <svg width="36" height="36" viewBox="0 0 36 36" fill="currentColor">
              {[0, 14, 27].map((y) => [0, 13, 27].map((x) => <rect key={x + y * 40} x={x} y={y} width="9" height="9" />))}
            </svg>
          </IconButton>
        </Actions>
      </Actions>
    </TopBar>
  );
}

function SizeChart() {
  const x0 = 192, x1 = 1145, y0 = 12, y1 = 394;
  const band = (x1 - x0) / buckets.length;
  const ticks = [1, 0.75, 0.5, 0.25, 0];
  const yOf = (v) => y1 - v * (y1 - y0);
  return (
    <svg width="100%" viewBox="0 0 1157 494" fontSize="31" fill={INK} role="img" aria-label="Files by size">
      <g stroke="#ccc" strokeWidth="2" strokeDasharray="7 6">
        {ticks.map((t) => <path key={t} d={`M${x0} ${yOf(t)}H${x1}`} />)}
        <path d={`M${x0} ${y0}V${y1}M${x1} ${y0}V${y1}`} />
        {buckets.map((b, i) => <path key={i} d={`M${x0 + band * (i + 0.5)} ${y0}V${y1}`} />)}
      </g>
      {buckets.map((b, i) => b.count > 0 && (
        <rect key={i} x={x0 + band * (i + 0.5) - 57} y={yOf(b.count)} width="113" height={y1 - yOf(b.count)} rx="8" fill="#b88b54" />
      ))}
      {ticks.map((t) => (
        <text key={t} x="173" y={(t === 1 ? y0 + 14 : yOf(t)) + 11} textAnchor="end">{t}</text>
      ))}
      {buckets.map((b, i) => b.label.map((line, n) => (
        <text key={i + "-" + n} x={x0 + band * (i + 0.5)} y={435 + n * 34} textAnchor="middle">{line}</text>
      )))}
      <text transform="translate(34 204) rotate(-90)" textAnchor="middle" fontWeight="700">Count</text>
    </svg>
  );
}

function Artifacts() {
  return (
    <Content>
      <CardRow $below={81}><CardTail /><CardTail /></CardRow>
      <CardRow $below={69}>
        <Card>
          <CardHead><CardTitle>Files - Rare Transfers</CardTitle></CardHead>
          <HashTable>
            <thead>
              <tr>
                <HashHead $w="75.4%">
                  <HashHeadInner $rule><HeadText>Hash</HeadText><SortIcon w={18} /></HashHeadInner>
                </HashHead>
                <HashHead>
                  <HashHeadInner><HeadText>Type</HeadText><SortIcon w={18} /></HashHeadInner>
                </HashHead>
              </tr>
            </thead>
            <tbody>
              <tr>
                <HashCell>4a1d88603b1007825a9c6b36d1e5de44</HashCell>
                <HashCell>x-dosexec</HashCell>
              </tr>
            </tbody>
          </HashTable>
        </Card>
        <Card>
          <CardHead>
            <CardTitle>Files - Size Distribution</CardTitle>
            <Switcher>
              <SwitchButton $active>
                <svg width="34" height="32" viewBox="0 0 34 32" fill="currentColor">
                  <rect x="4" y="8" width="6" height="20" rx="3" /><rect x="14" y="1" width="6" height="27" rx="3" /><rect x="24" y="15" width="6" height="13" rx="3" />
                </svg>
                Chart
              </SwitchButton>
              <SwitchButton>
                <Stroke w={34} h={34} vb="0 0 34 34"><rect x="2" y="2" width="30" height="29" rx="1" /><path d="M2 12h30M2 19h30M2 25h30M12 12v19M22 12v19" /></Stroke>
                Table
              </SwitchButton>
            </Switcher>
            <IconButton $color={INK} aria-label="Full screen">
              <svg width="42" height="42" viewBox="0 0 42 42" fill="currentColor">
                <path d="M0 0h14v4H9l5 6-4 4-6-5v5H0zM42 0H28v4h5l-5 6 4 4 6-5v5h4zM0 42h14v-4H9l5-6-4-4-6 5v-5H0zM42 42H28v-4h5l-5-6 4-4 6 5v-5h4z" />
              </svg>
            </IconButton>
          </CardHead>
          <SizeChart />
        </Card>
      </CardRow>
      <LogScroller>
        <LogTable>
          <thead>
            <tr>
              {columns.map((c) => (
                <LogHead key={c.title} $w={c.w}>
                  <LogHeadInner><HeadText>{c.title}</HeadText>{c.sort && <SortIcon />}</LogHeadInner>
                </LogHead>
              ))}
            </tr>
          </thead>
          <tbody>
            <tr>
              <LogCell>1/31/2021<Faint>5:00:27 AM</Faint></LogCell>
              <LogCell>10.0.2.4</LogCell>
              <LogCell>10.0.2.15</LogCell>
              <LogCell>49188</LogCell>
              <LogCell>8000</LogCell>
              <LogCell>HTTP</LogCell>
              <LogCell>0</LogCell>
              <LogCell>SHA1,<br />EXTRACT,<br />MD5, PE</LogCell>
              <LogCell>application/x-dosexec</LogCell>
            </tr>
          </tbody>
        </LogTable>
      </LogScroller>
    </Content>
  );
}

export default function App() {
  return (
    <Desktop>
      <GlobalStyle />
      <TopPanel />
      <BrowserChrome />
      <Page>
        <Site>
          <SiteHeader />
          <Body>
            <Sidebar>
              {Object.entries(SideGlyphs).map(([name, glyph]) => (
                <SideItem key={name} $active={name === "artifacts"} aria-label={name}>{glyph}</SideItem>
              ))}
            </Sidebar>
            <Artifacts />
          </Body>
        </Site>
        <SideDrawer>
          <IconButton $color={INK} aria-label="Open drawer"><Chevron dir="left" w={26} /></IconButton>
        </SideDrawer>
      </Page>
      <Footer>
        <FooterItem as="a" href="#" $rule>About</FooterItem>
        <FooterItem as="a" href="#" $rule>Privacy Policy</FooterItem>
        <FooterItem as="a" href="#" $rule>Terms of Service</FooterItem>
        <FooterItem>
          <Stroke w={30} vb="0 0 30 30"><circle cx="15" cy="15" r="13" /><path d="M20 10q-3-3-7-2-4 2-4 7t4 7q4 1 7-2" /></Stroke>
          2023 Dynamite Analytics.
        </FooterItem>
        <FooterItem as="button" aria-label="Expand footer"><Chevron dir="up" w={28} sw={2} /></FooterItem>
      </Footer>
      <Captcha>
        <svg width="86" height="86" viewBox="0 0 64 64">
          <path d="M64 31.955l-.033-1.370V4.687l-7.160 7.160C50.948 4.674 42.033.093 32.050.093c-10.400 0-19.622 4.960-25.458 12.640l11.736 11.860a15.550 15.550 0 0 1 4.754-5.334c2.050-1.600 4.952-2.906 8.968-2.906.485 0 .860.057 1.135.163 4.976.393 9.288 3.140 11.828 7.124l-8.307 8.307L64 31.953" fill="#1c3aa9" />
          <path d="M31.862.094l-1.370.033H4.594l7.160 7.160C4.580 13.147 0 22.060 0 32.046c0 10.400 4.960 19.622 12.640 25.458L24.500 45.768a15.550 15.550 0 0 1-5.334-4.754c-1.600-2.050-2.906-4.952-2.906-8.968 0-.485.057-.860.163-1.135.393-4.976 3.140-9.288 7.124-11.828l8.307 8.307L31.860.095" fill="#5a8def" />
          <path d="M.001 32.045l.033 1.370v25.898l7.160-7.160c5.860 7.173 14.774 11.754 24.760 11.754 10.400 0 19.622-4.960 25.458-12.640l-11.736-11.860a15.550 15.550 0 0 1-4.754 5.334c-2.050 1.600-4.952 2.906-8.968 2.906-.485 0-.860-.057-1.135-.163-4.976-.393-9.288-3.140-11.828-7.124l8.307-8.307c-10.522.040-22.400.066-27.295-.005" fill="#b5b5b5" />
        </svg>
        <CaptchaLinks><a href="#">Privacy</a> - <a href="#">Terms</a></CaptchaLinks>
      </Captcha>
      <Pointer width="28" height="50" viewBox="0 0 28 50" aria-hidden="true">
        <path d="M3 3v36l8-7 6 14 5-2-6-14h11z" fill="#111" stroke="#fff" strokeWidth="2" />
      </Pointer>
    </Desktop>
  );
}
